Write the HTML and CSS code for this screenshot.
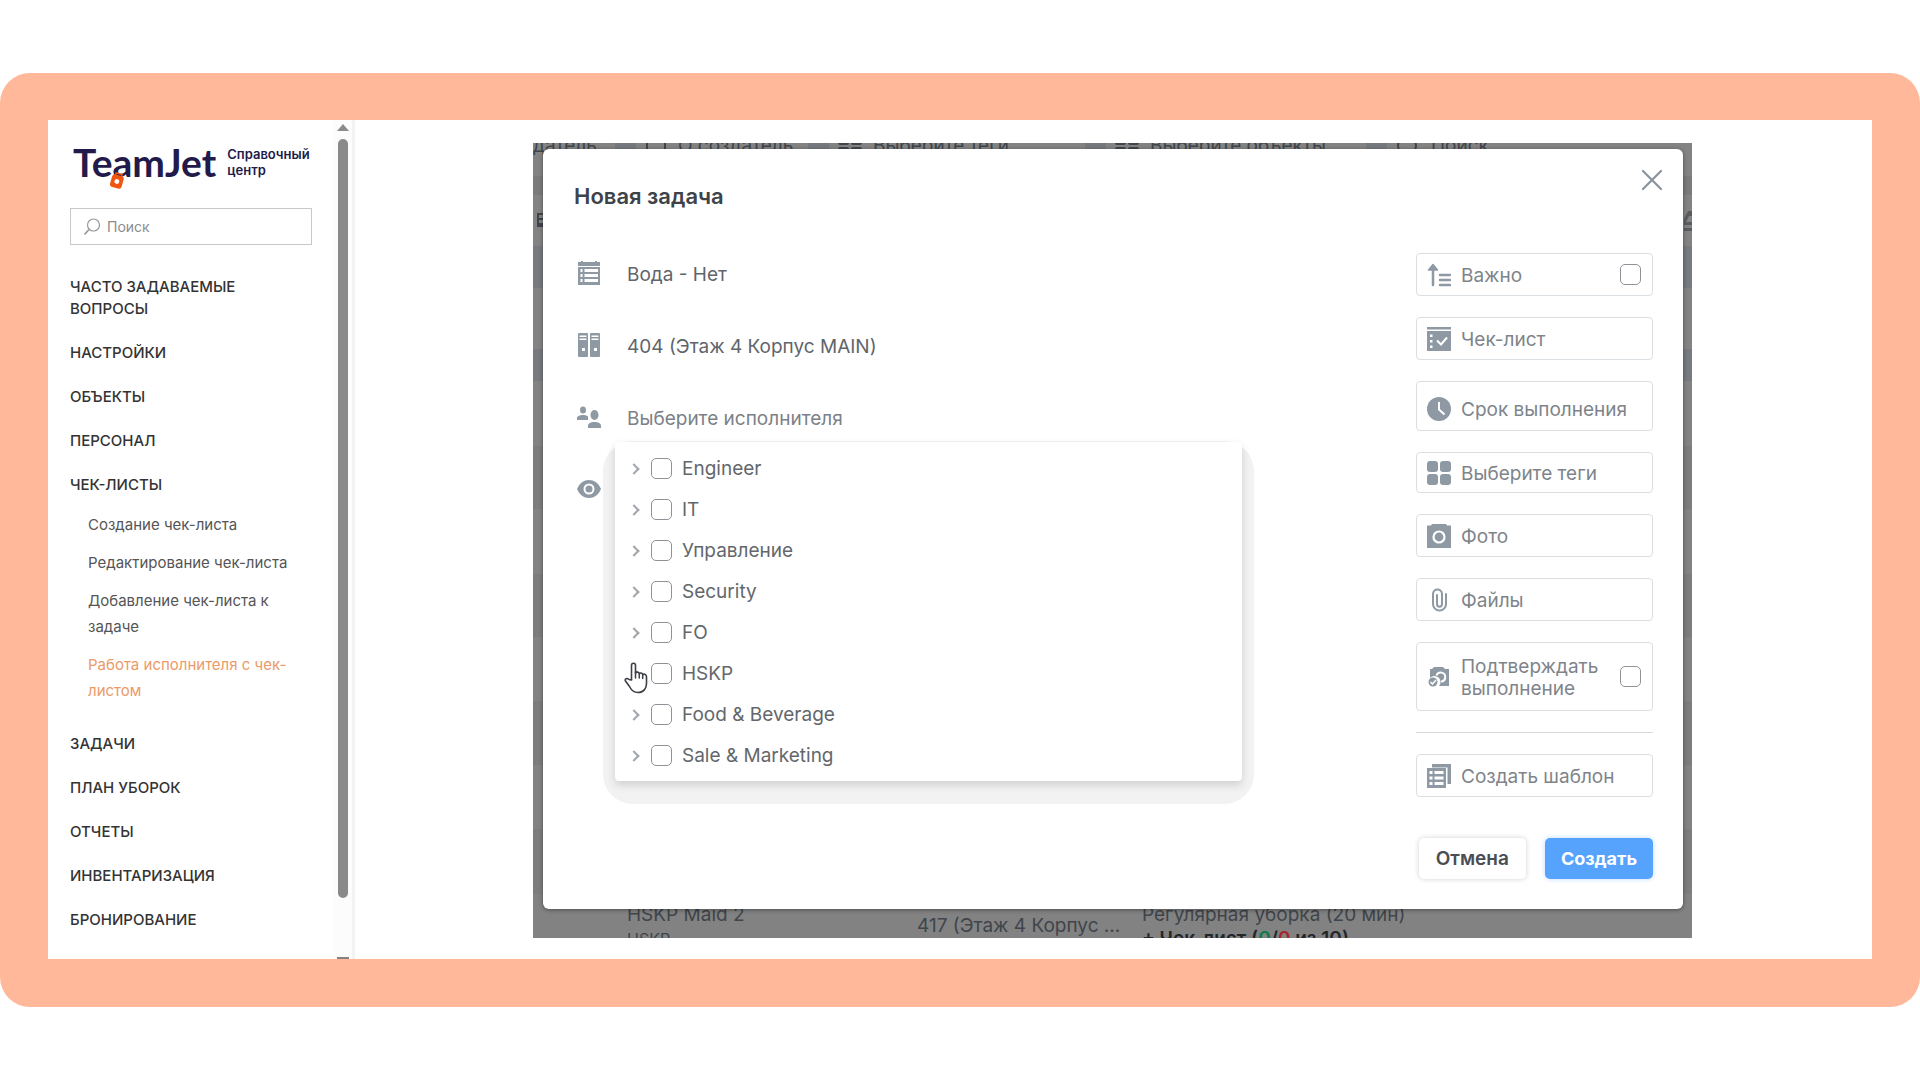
FILE: index.html
```html
<!DOCTYPE html>
<html lang="ru">
<head>
    <meta charset="UTF-8">
    <meta name="viewport" content="width=device-width, initial-scale=1.0">
    <title>TeamJet - Справочный центр</title>
    <link rel="stylesheet" href="styles.css">
</head>
<body>
    <div class="frame">
        <div class="page">

            <!-- Sidebar -->
            <aside class="sidebar">
                <div class="sidebar-content">
                    <a class="brand" href="#">
                        <span class="brand-name">TeamJet
                            <svg class="brand-tag" viewBox="0 0 16 18" width="16" height="18">
                                <g transform="rotate(16 8 9)">
                                    <rect x="2" y="3" width="12" height="13" rx="3" fill="#f0560f"/>
                                    <path d="M5 3.5V1.5h6v2" fill="none" stroke="#f0560f" stroke-width="1.5"/>
                                    <circle cx="8" cy="9.5" r="2.4" fill="#fff"/>
                                </g>
                            </svg>
                        </span>
                        <span class="brand-text">Справочный<br>центр</span>
                    </a>

                    <form class="search">
                        <svg viewBox="0 0 18 18" width="18" height="18" fill="none" stroke="#999" stroke-width="1.2">
                            <circle cx="10.5" cy="7" r="6"/>
                            <path d="M6 11.500L1.500 16.500" stroke-width="1.800"/>
                        </svg>
                        <input type="search" placeholder="Поиск" aria-label="Поиск">
                    </form>

                    <nav class="menu">
                        <a href="#">ЧАСТО ЗАДАВАЕМЫЕ ВОПРОСЫ</a>
                        <a href="#">НАСТРОЙКИ</a>
                        <a href="#">ОБЪЕКТЫ</a>
                        <a href="#">ПЕРСОНАЛ</a>
                        <a href="#">ЧЕК-ЛИСТЫ</a>
                        <div class="submenu">
                            <a href="#">Создание чек-листа</a>
                            <a href="#">Редактирование чек-листа</a>
                            <a href="#">Добавление чек-листа к задаче</a>
                            <a href="#" class="active">Работа исполнителя с чек-листом</a>
                        </div>
                        <a href="#">ЗАДАЧИ</a>
                        <a href="#">ПЛАН УБОРОК</a>
                        <a href="#">ОТЧЕТЫ</a>
                        <a href="#">ИНВЕНТАРИЗАЦИЯ</a>
                        <a href="#">БРОНИРОВАНИЕ</a>
                    </nav>
                </div>
                <div class="scrollbar">
                    <span class="arrow-up"></span>
                    <span class="thumb"></span>
                    <span class="arrow-down"></span>
                </div>
            </aside>

            <!-- Application with the task dialog -->
            <main class="main">
                <div class="app">
                    <div class="backdrop" aria-hidden="true">
                        <div class="toolbar">
                            <div class="filter"><span class="filter-text">датель</span><i class="clear"></i></div>
                            <div class="filter"><svg viewBox="0 0 22 22" width="22" height="22" fill="none" stroke="currentColor" stroke-width="2"><path d="M2 1v20M20 1v20"/></svg><span class="filter-text">О создатель</span><i class="clear"></i></div>
                            <div class="filter"><svg viewBox="0 0 24 24" width="24" height="24" fill="currentColor"><rect width="11" height="11" rx="2"/><rect x="13" width="11" height="11" rx="2"/><rect y="13" width="11" height="11" rx="2"/><rect x="13" y="13" width="11" height="11" rx="2"/></svg><span class="filter-text">Выберите теги</span><i class="clear"></i></div>
                            <div class="filter"><svg viewBox="0 0 24 24" width="24" height="24" fill="currentColor"><rect width="11" height="11" rx="2"/><rect x="13" width="11" height="11" rx="2"/><rect y="13" width="11" height="11" rx="2"/><rect x="13" y="13" width="11" height="11" rx="2"/></svg><span class="filter-text">Выберите объекты</span><i class="clear"></i></div>
                            <div class="filter"><svg viewBox="0 0 24 24" width="24" height="24" fill="none" stroke="currentColor" stroke-width="2"><circle cx="11" cy="12" r="9"/></svg><span class="filter-text">Поиск</span></div>
                        </div>
                        <div class="head-row">
                            <svg viewBox="0 0 6 18" width="6" height="18" fill="currentColor"><path d="M0 2h6v2H2v3h4v2H2v3h4v4H0z"/></svg>
                            <svg viewBox="0 0 8 20" width="8" height="20" fill="currentColor"><path d="M0 8l4-8h4v5H5L2 11h6v3H0zM0 17h8v3H0z" opacity=".6"/></svg>
                        </div>
                        <div class="task-row">
                            <div class="cell who">HSKP Maid 2<small>HSKP</small></div>
                            <div class="cell room">417 (Этаж 4 Корпус ...</div>
                            <div class="cell">Регулярная уборка (20 мин)<b>+ Чек-лист (<span class="done">0</span>/<span class="failed">0</span> из 10)</b></div>
                        </div>
                    </div>

                    <div class="modal" role="dialog" aria-labelledby="modalTitle">
                        <div class="modal-header">
                            <h2 id="modalTitle">Новая задача</h2>
                            <button type="button" class="close" aria-label="Закрыть">
                                <svg viewBox="0 0 22 22" width="22" height="22" stroke="#8a949e" stroke-width="2.200" stroke-linecap="round"><path d="M2 2l18 18M20 2L2 20"/></svg>
                            </button>
                        </div>

                        <div class="modal-body">
                            <div class="fields">
                                <div class="field">
                                    <svg viewBox="0 0 24 26" width="24" height="26" fill="#8e99a4">
                                        <path d="M4 1h2v1h12V1h2v1h3v4H1V2h3z"/>
                                        <path fill-rule="evenodd" d="M1 7h22v18H1zM3.500 9v3h2V9zm4 0v3H21V9zm-4 5v3h2v-3zm4 0v3H21v-3zm-4 5v3h2v-3zm4 0v3H21v-3z"/>
                                    </svg>
                                    <input type="text" value="Вода - Нет" aria-label="Задача">
                                </div>
                                <div class="field">
                                    <svg viewBox="0 0 24 26" width="24" height="26" fill="#8e99a4">
                                        <path fill-rule="evenodd" d="M2 1h8a1 1 0 0 1 1 1v22a1 1 0 0 1-1 1H2a1 1 0 0 1-1-1V2a1 1 0 0 1 1-1zm.500 2.500v1.500h7V3.500zm0 3v1.500h7V6.500zM5 16v3h3v-3z"/>
                                        <path fill-rule="evenodd" d="M14 1h8a1 1 0 0 1 1 1v22a1 1 0 0 1-1 1h-8a1 1 0 0 1-1-1V2a1 1 0 0 1 1-1zm.500 2.500v1.500h7V3.500zm0 3v1.500h7V6.500zM17 16v3h3v-3z"/>
                                    </svg>
                                    <input type="text" value="404 (Этаж 4 Корпус MAIN)" aria-label="Объект">
                                </div>
                                <div class="field">
                                    <svg viewBox="0 0 24 24" width="24" height="24" fill="#8e99a4">
                                        <ellipse cx="6" cy="5" rx="3" ry="3.500"/>
                                        <path d="M0 15v-2c0-2 3-3 6-3 2 0 4 .500 5 1.500V15z"/>
                                        <ellipse cx="17.500" cy="10" rx="4" ry="5"/>
                                        <path d="M11 23v-2c0-3 3-4 6.500-4s6.500 1 6.500 4v2z"/>
                                    </svg>
                                    <input type="text" placeholder="Выберите исполнителя" aria-label="Исполнитель">

                                    <div class="dropdown">
                                        <label class="option"><i class="chevron"></i><input type="checkbox"><span>Engineer</span></label>
                                        <label class="option"><i class="chevron"></i><input type="checkbox"><span>IT</span></label>
                                        <label class="option"><i class="chevron"></i><input type="checkbox"><span>Управление</span></label>
                                        <label class="option"><i class="chevron"></i><input type="checkbox"><span>Security</span></label>
                                        <label class="option"><i class="chevron"></i><input type="checkbox"><span>FO</span></label>
                                        <label class="option"><i class="chevron"></i><input type="checkbox"><span>HSKP</span></label>
                                        <label class="option"><i class="chevron"></i><input type="checkbox"><span>Food &amp; Beverage</span></label>
                                        <label class="option"><i class="chevron"></i><input type="checkbox"><span>Sale &amp; Marketing</span></label>
                                        <svg class="cursor" viewBox="0 0 24 32" width="24" height="32">
                                            <path d="M7.500 18V3.500c0-3 4-3 4 0V11c1-1.500 3.500-1 3.800.700 1-1.200 3-.700 3.400.900 1.500-1 3.800-.200 3.800 2v6.900c0 5-3 9-8.500 9-5 0-7-3-8.500-6L1.500 19c-1-2 1.500-3.500 3.500-1.500z" fill="#fff" stroke="#3c3f46" stroke-width="1.600" stroke-linejoin="round"/>
                                            <path d="M11.500 10v6M15.300 11.500V16M18.700 12.500V16.500" stroke="#3c3f46" stroke-width="1.500" stroke-linecap="round"/>
                                        </svg>
                                    </div>
                                </div>
                                <div class="field">
                                    <svg viewBox="0 0 24 24" width="24" height="24">
                                        <path d="M0 12C2.500 6 7 3 12 3s9.500 3 12 9c-2.500 6-7 9-12 9S2.500 18 0 12z" fill="#8e99a4"/>
                                        <circle cx="12" cy="12" r="4.500" fill="none" stroke="#fff" stroke-width="2"/>
                                    </svg>
                                </div>
                            </div>

                            <div class="actions">
                                <label class="action">
                                    <svg viewBox="0 0 24 24" width="24" height="24" fill="none" stroke="#8e99a4" stroke-width="2.500" stroke-linecap="round"><path d="M6 22V6M13 12h10M13 17h10M13 22h10"/><path d="M6 1.500L10.500 7h-9z" fill="#8e99a4" stroke-width="1.500" stroke-linejoin="round"/></svg>
                                    <span>Важно</span>
                                    <input type="checkbox">
                                </label>
                                <button type="button" class="action">
                                    <svg viewBox="0 0 24 24" width="24" height="24"><path d="M0 0h24v2.500H0zM0 4h24v20H0z" fill="#8e99a4"/><path d="M3 7.500h2.500v2.500H3zM3 13h2.500v2.500H3zM3 18.500h2.500v2.500H3z" fill="#fff"/><path d="M10 13.500l4 4 6-7" fill="none" stroke="#fff" stroke-width="2"/></svg>
                                    <span>Чек-лист</span>
                                </button>
                                <button type="button" class="action deadline">
                                    <svg viewBox="0 0 24 24" width="24" height="24"><circle cx="12" cy="12" r="12" fill="#8e99a4"/><path d="M12 5v7.500l5.500 5" fill="none" stroke="#fff" stroke-width="2"/></svg>
                                    <span>Срок выполнения</span>
                                </button>
                                <button type="button" class="action tags">
                                    <svg viewBox="0 0 24 24" width="24" height="24" fill="#8e99a4"><rect width="11" height="11" rx="3"/><rect x="13" width="11" height="11" rx="3"/><rect y="13" width="11" height="11" rx="3"/><rect x="13" y="13" width="11" height="11" rx="3"/></svg>
                                    <span>Выберите теги</span>
                                </button>
                                <button type="button" class="action">
                                    <svg viewBox="0 0 24 24" width="24" height="24"><path d="M5 0h14l1 1.500h4V24H0V1.500h4z" fill="#8e99a4"/><circle cx="12" cy="13" r="5.500" fill="none" stroke="#fff" stroke-width="2.200"/></svg>
                                    <span>Фото</span>
                                </button>
                                <button type="button" class="action">
                                    <svg viewBox="0 0 24 24" width="24" height="24" fill="none" stroke="#8e99a4" stroke-width="2" stroke-linecap="round"><path d="M19 6v10a6 6 0 0 1-13 0V6c0-6 9-6 9 0v10c0 3.500-5 3.500-5 0V7"/></svg>
                                    <span>Файлы</span>
                                </button>
                                <label class="action confirm">
                                    <svg viewBox="0 0 24 24" width="24" height="24"><path d="M7 2h9l2 2h4v17H12a6 6 0 0 0-9-8V4h2z" fill="#8e99a4"/><path d="M9.500 10.500a4.500 4.500 0 1 1 4.500 6" fill="none" stroke="#fff" stroke-width="2"/><circle cx="6" cy="17" r="4.500" fill="#8e99a4"/><path d="M3.500 17l2 2 3.500-4" fill="none" stroke="#fff" stroke-width="1.500"/></svg>
                                    <span>Подтверждать выполнение</span>
                                    <input type="checkbox">
                                </label>
                                <hr>
                                <button type="button" class="action">
                                    <svg viewBox="0 0 24 24" width="24" height="24" fill="#8e99a4"><path d="M5 0h19v20h-3.500V3.500H5z"/><path fill-rule="evenodd" d="M0 4h19v20H0zM2.500 7v3h3V7zm5 0v3h9V7zm-5 5.500v3h3v-3zm5 0v3h9v-3zm-5 5.500v3h3v-3zm5 0v3h9v-3z"/></svg>
                                    <span>Создать шаблон</span>
                                </button>
                            </div>
                        </div>

                        <div class="modal-footer">
                            <button type="button" class="btn btn-cancel">Отмена</button>
                            <button type="submit" class="btn btn-create">Создать</button>
                        </div>
                    </div>
                </div>
            </main>
        </div>
    </div>
</body>
</html>
```
FILE: styles.css
```css
* {
    box-sizing: border-box;
}

body {
    margin: 0;
    min-height: 100vh;
    display: flex;
    align-items: center;
    background: #fff;
    font-family: Inter, "Noto Sans", sans-serif;
}

a {
    color: inherit;
    text-decoration: none;
}

input,
button {
    font: inherit;
    color: inherit;
}

svg {
    flex-shrink: 0;
}

.frame {
    flex: 1;
    padding: 47px 48px 48px;
    border-radius: 30px;
    background: #ffb899;
}

.page {
    display: flex;
    background: #fff;
}

/* Sidebar */
.sidebar {
    width: 307px;
    flex-shrink: 0;
    display: flex;
    border-right: 3px solid #f3f3f3;
}

.sidebar-content {
    flex: 1;
    min-width: 0;
    padding: 18px 22px 0;
}

.brand {
    display: flex;
    align-items: center;
    gap: 11px;
    height: 48px;
    padding-left: 3px;
    color: #231a4c;
}

.brand-name {
    position: relative;
    font-family: Lato, sans-serif;
    font-size: 39px;
    font-weight: 700;
    line-height: 44px;
}

.brand-tag {
    position: absolute;
    left: 36px;
    top: 32px;
}

.brand-text {
    font-size: 13px;
    font-weight: 600;
    line-height: 16px;
}

.search {
    display: flex;
    align-items: center;
    gap: 6px;
    height: 37px;
    margin-top: 22px;
    padding: 0 12px;
    border: 1px solid #c8c8c8;
}

.search input {
    flex: 1;
    min-width: 0;
    padding: 0;
    border: none;
    outline: none;
    background: none;
    font-size: 14px;
}

.search input::placeholder {
    color: #8c8c8c;
    opacity: 1;
}

.menu {
    display: flex;
    flex-direction: column;
    gap: 22px;
    padding-top: 31px;
    color: #333;
    font-size: 15px;
    font-weight: 500;
    line-height: 22px;
}

.submenu {
    display: flex;
    flex-direction: column;
    gap: 12px;
    margin: -6px 0 7px;
    padding-left: 18px;
    color: #555;
    font-weight: 400;
    line-height: 26px;
}

.submenu .active {
    color: #eb9a68;
}

.scrollbar {
    width: 18px;
    display: flex;
    flex-direction: column;
    align-items: center;
    padding-top: 4px;
    background: #fcfcfc;
}

.thumb {
    flex: 1;
    width: 10px;
    margin: 8px 0 59px;
    border-radius: 5px;
    background: #8a8a8a;
}

.arrow-up {
    border: 6px solid transparent;
    border-top: none;
    border-bottom: 7px solid #8a8a8a;
}

.arrow-down {
    width: 12px;
    height: 2px;
    background: #8a7f7c;
}

/* Application behind the dialog */
.main {
    flex: 1;
    min-width: 0;
    padding: 23px 180px 21px 178px;
}

.app {
    position: relative;
    overflow: hidden;
    padding: 6px 9px 29px 10px;
}

.backdrop {
    position: absolute;
    inset: 0;
    display: flex;
    flex-direction: column;
    color: #3f454a;
    font-size: 19px;
    background: linear-gradient(
        #838383 33px, #7b7b7c 33px 52px, #838383 52px 103px,
        #777a7e 103px 145px, #838383 145px 206px, #777a7e 206px 238px,
        #838383 238px 303px, #7d7d7d 303px 366px, #838383 366px 431px,
        #7d7d7d 431px 494px, #838383 494px 558px, #7d7d7d 558px 622px,
        #838383 622px 686px, #7d7d7d 686px 751px, #828282 751px
    );
}

.toolbar {
    display: grid;
    grid-template-columns: 112fr 193fr 277fr 281fr 296fr;
    height: 6px;
}

.filter {
    display: flex;
    align-items: center;
    gap: 11px;
    height: 6px;
    padding-right: 9px;
    white-space: nowrap;
}

.filter-text {
    flex: 1;
    line-height: 6px;
}

.clear {
    width: 21px;
    height: 16px;
    background: #75797d;
}

.head-row {
    display: flex;
    justify-content: space-between;
    padding: 62px 0 0 4px;
}

.task-row {
    display: grid;
    grid-template-columns: 290fr 225fr 550fr;
    height: 35px;
    margin-top: auto;
    padding-left: 94px;
    line-height: 24px;
    white-space: nowrap;
}

.cell small,
.cell b {
    display: block;
}

.cell small {
    font-size: 16px;
}

.cell b {
    color: #24272a;
    font-weight: 600;
}

.room {
    padding-top: 11px;
}

.done {
    color: #0d7a4c;
}

.failed {
    color: #a8242c;
}

/* Dialog */
.modal {
    position: relative;
    padding-bottom: 30px;
    border-radius: 6px;
    background: #fff;
    box-shadow: 0 1px 4px rgba(0, 0, 0, 0.4);
}

.modal-header {
    display: flex;
    justify-content: space-between;
    align-items: flex-start;
    height: 104px;
    padding: 20px 20px 0 31px;
}

.modal-header h2 {
    margin: 13px 0 0;
    color: #3d4349;
    font-size: 22px;
    font-weight: 600;
    line-height: 28px;
}

.close {
    display: flex;
    padding: 0;
    border: none;
    background: none;
    cursor: pointer;
}

.modal-body {
    display: flex;
    justify-content: space-between;
    padding: 0 30px 0 31px;
    font-size: 19px;
}

.fields {
    width: 62%;
    display: flex;
    flex-direction: column;
    gap: 32px;
}

.field {
    position: relative;
    display: flex;
    align-items: center;
    gap: 26px;
    height: 40px;
    padding-left: 3px;
}

.field > input {
    flex: 1;
    min-width: 0;
    padding: 2px 0 0;
    border: none;
    outline: none;
    background: none;
    color: #5f656b;
}

.field > input::placeholder {
    color: #7b8187;
    opacity: 1;
}

.dropdown {
    position: absolute;
    z-index: 1;
    top: 45px;
    left: 41px;
    right: 1px;
    padding: 5px 0 6px;
}

/* wide pale halo round the list */
.dropdown::before {
    content: "";
    position: absolute;
    z-index: -2;
    inset: -1px -12px -23px;
    border-radius: 30px;
    background: #f2f2f2;
}

.dropdown::after {
    content: "";
    position: absolute;
    z-index: -1;
    inset: 0;
    border-radius: 4px;
    background: #fff;
    box-shadow: 0 4px 8px rgba(0, 0, 0, 0.14);
}

.option {
    display: flex;
    align-items: center;
    height: 41px;
    padding-left: 15px;
    color: #63676c;
}

.option input {
    margin: 1px 10px 0 13px;
}

.option span,
.action span {
    padding-top: 2px;
}

.chevron {
    width: 8px;
    height: 8px;
    margin-top: 2px;
    border: solid #a3a7ab;
    border-width: 2px 2px 0 0;
    transform: rotate(45deg);
}

input[type="checkbox"] {
    appearance: none;
    flex-shrink: 0;
    width: 21px;
    height: 21px;
    border: 1px solid #8f9398;
    border-radius: 5px;
    background: #fff;
}

.cursor {
    position: absolute;
    left: 9px;
    top: 220px;
}

.actions {
    width: 237px;
    display: flex;
    flex-direction: column;
    gap: 21px;
}

.action {
    display: flex;
    align-items: center;
    gap: 10px;
    height: 43px;
    padding: 0 11px 0 10px;
    border: 1px solid #dadfe3;
    border-radius: 4px;
    background: #fff;
    color: #7e848a;
    line-height: 22px;
    text-align: left;
    cursor: pointer;
}

.action span {
    flex: 1;
}

.action input {
    margin: 0;
}

.deadline {
    height: 50px;
    padding-top: 6px;
    white-space: nowrap;
}

.tags {
    height: 41px;
}

.confirm {
    height: 69px;
}

.actions hr {
    width: 100%;
    height: 1px;
    margin: 0;
    border: none;
    background: #d5dadf;
}

.modal-footer {
    display: flex;
    justify-content: flex-end;
    gap: 19px;
    padding: 41px 30px 0;
}

.btn {
    height: 41px;
    padding: 0 16px;
    border: none;
    border-radius: 5px;
    font-size: 18px;
    cursor: pointer;
}

.btn-cancel {
    padding: 0 17px;
    background: #fff;
    color: #494e54;
    font-size: 19px;
    font-weight: 600;
    box-shadow: 0 0 5px rgba(60, 70, 80, 0.25);
}

.btn-create {
    background: #55a3fd;
    color: #fff;
    font-weight: 700;
    box-shadow: 0 0 5px rgba(85, 163, 253, 0.4);
}
```
